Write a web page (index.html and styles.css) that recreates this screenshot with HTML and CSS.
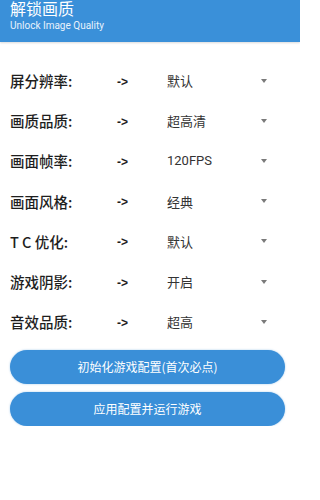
FILE: index.html
```html
<!DOCTYPE html>
<html lang="zh">
<head>
<meta charset="utf-8">
<meta name="viewport" content="width=300">
<link rel="stylesheet" href="styles.css">
</head>
<body>
<div class="page">
  <header class="header">
    <div class="title">解锁画质</div>
    <div class="subtitle">Unlock Image Quality</div>
  </header>
  <main class="settings">
    <div class="row"><span class="label">屏分辨率:</span><span class="arrow">-&gt;</span><span class="value">默认</span><span class="caret"></span></div>
    <div class="row"><span class="label">画质品质:</span><span class="arrow">-&gt;</span><span class="value">超高清</span><span class="caret"></span></div>
    <div class="row"><span class="label">画面帧率:</span><span class="arrow">-&gt;</span><span class="value">120FPS</span><span class="caret"></span></div>
    <div class="row"><span class="label">画面风格:</span><span class="arrow">-&gt;</span><span class="value">经典</span><span class="caret"></span></div>
    <div class="row"><span class="label">T C 优化:</span><span class="arrow">-&gt;</span><span class="value">默认</span><span class="caret"></span></div>
    <div class="row"><span class="label">游戏阴影:</span><span class="arrow">-&gt;</span><span class="value">开启</span><span class="caret"></span></div>
    <div class="row"><span class="label">音效品质:</span><span class="arrow">-&gt;</span><span class="value">超高</span><span class="caret"></span></div>
  </main>
  <div class="actions">
    <button class="btn">初始化游戏配置(首次必点)</button>
    <button class="btn">应用配置并运行游戏</button>
  </div>
</div>
</body>
</html>
```
FILE: styles.css
```css
html, body {
  margin: 0;
  padding: 0;
  background: #ffffff;
  font-family: Roboto, "Noto Sans CJK SC", sans-serif;
}

.page {
  width: 300px;
  overflow: hidden;
}

.header {
  height: 42px;
  background: #3a90d9;
  box-sizing: border-box;
  padding-left: 10px;
  color: #ffffff;
  overflow: hidden;
  box-shadow: 0 1px 2px rgba(0, 0, 0, 0.15);
}

.title {
  font-size: 16px;
  line-height: 17px;
  margin-top: 0;
  font-family: "Noto Sans CJK SC", sans-serif;
}

.subtitle {
  font-size: 10px;
  line-height: 12px;
  margin-top: 3px;
  color: #e8f2fc;
}

.settings {
  margin-top: 18.5px;
  padding-left: 10px;
}

.row {
  display: grid;
  grid-template-columns: 107px 50px 1fr 7px;
  align-items: center;
  height: 40.2px;
  padding-right: 32px;
}

.label {
  font-family: "Noto Sans CJK SC", sans-serif;
  font-size: 14.5px;
  font-weight: 500;
  color: #1e1e1e;
  white-space: nowrap;
}

.arrow {
  font-family: "Liberation Sans", sans-serif;
  font-weight: bold;
  font-size: 12px;
  line-height: 14px;
  padding-top: 2px;
  color: #1e1e1e;
}

.value {
  font-family: Roboto, "Noto Sans CJK SC", sans-serif;
  font-size: 13px;
  color: #333333;
}

.caret {
  width: 0;
  height: 0;
  border-left: 3.5px solid transparent;
  border-right: 3.5px solid transparent;
  border-top: 4px solid #7a7a7a;
}

.actions {
  display: flex;
  flex-direction: column;
  gap: 8px;
  margin-top: 8px;
  padding: 0 15px 0 10px;
}

.btn {
  height: 34px;
  border: none;
  border-radius: 17px;
  background: #3a8fd8;
  color: #ffffff;
  font-family: "Noto Sans CJK SC", sans-serif;
  font-size: 12px;
  box-shadow: 0 0 2px rgba(58, 143, 216, 0.5);
  padding: 0;
}
```
